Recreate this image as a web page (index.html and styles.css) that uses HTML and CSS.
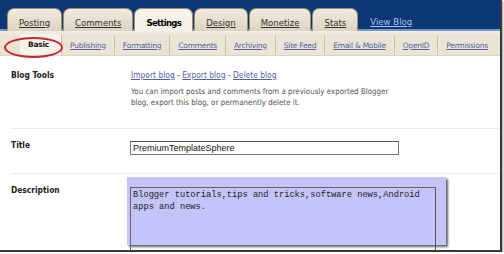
FILE: index.html
```html
<!DOCTYPE html>
<html>
<head>
<meta charset="utf-8">
<link rel="stylesheet" href="styles.css">
</head>
<body>
<div class="frame">
  <header class="topbar">
    <nav class="tabs">
      <a class="tab" href="#">Posting</a>
      <a class="tab" href="#">Comments</a>
      <a class="tab active" href="#">Settings</a>
      <a class="tab" href="#">Design</a>
      <a class="tab" href="#">Monetize</a>
      <a class="tab" href="#">Stats</a>
      <a class="viewblog" href="#">View Blog</a>
    </nav>
  </header>
  <nav class="subtabs">
    <a class="sub active" href="#">Basic</a>
    <a class="sub" href="#">Publishing</a>
    <a class="sub" href="#">Formatting</a>
    <a class="sub" href="#">Comments</a>
    <a class="sub" href="#">Archiving</a>
    <a class="sub" href="#">Site Feed</a>
    <a class="sub" href="#">Email &amp; Mobile</a>
    <a class="sub" href="#">OpenID</a>
    <a class="sub last" href="#">Permissions</a>
    <span class="circle"></span>
  </nav>
  <main class="content">
    <section class="row row-tools">
      <div class="label">Blog Tools</div>
      <div class="body">
        <div class="links"><a href="#">Import blog</a> - <a href="#">Export blog</a> - <a href="#">Delete blog</a></div>
        <p class="note">You can import posts and comments from a previously exported Blogger<br>blog, export this blog, or permanently delete it.</p>
      </div>
    </section>
    <section class="row row-title">
      <div class="label">Title</div>
      <div class="body">
        <input class="title-input" type="text" value="PremiumTemplateSphere">
      </div>
    </section>
    <section class="row row-desc">
      <div class="label">Description</div>
      <div class="desc-box">
        <textarea class="desc">Blogger tutorials,tips and tricks,software news,Android apps and news.</textarea>
      </div>
    </section>
  </main>
</div>
</body>
</html>
```
FILE: styles.css
```css
* { box-sizing: border-box; }
html, body { margin: 0; padding: 0; background: #ffffff; }
body {
  font-family: "DejaVu Sans", Verdana, sans-serif;
}
.frame {
  width: 502px;
  height: 252px;
  overflow: hidden;
  background: #fff;
  border-right: 2px solid #3a3a3a;
  border-bottom: 2px solid #3a3a3a;
  box-shadow: 1px 1px 2px #999;
}
.topbar {
  background: #0b3775;
  height: 31px;
  border-bottom: 2px solid #7594c9;
}
.tabs {
  display: flex;
  align-items: flex-end;
  height: 29px;
  padding-left: 7px;
  gap: 1px;
  font-stretch: condensed;
}
.tab {
  display: block;
  height: 23px;
  margin-bottom: -2px;
  padding: 8px 11px 0;
  font-size: 9.5px;
  line-height: 12px;
  white-space: nowrap;
  color: #333;
  text-decoration: underline;
  background: linear-gradient(#f1ebdf, #ddd3c0);
  border: 1px solid #a09070;
  border-bottom: none;
  border-radius: 7px 7px 0 0;
}
.tab.active {
  background: #f6f2ea;
  color: #000;
  font-weight: bold;
  letter-spacing: -0.7px;
  text-decoration: none;
}
.viewblog {
  margin-left: 11px;
  margin-bottom: 1px;
  font-size: 9.5px;
  line-height: 12px;
  white-space: nowrap;
  color: #a9c4f0;
  text-decoration: underline;
}
.subtabs {
  position: relative;
  display: flex;
  height: 25px;
  padding-left: 20px;
  background: linear-gradient(#f4efe6 0, #ebe3d4 4px, #ebe3d4 100%);
  border-bottom: 1px solid #ddd3c1;
}
.sub {
  display: flex;
  align-items: center;
  margin-top: 4px;
  padding: 0 8px;
  font-size: 7.5px;
  letter-spacing: -0.25px;
  white-space: nowrap;
  color: #4f63a6;
  text-decoration: underline;
  border-right: 1px solid #cdbfa6;
}
.sub.active {
  margin-top: 3px;
  background: #f7f3ec;
  color: #111;
  font-weight: bold;
  text-decoration: none;
  padding: 0 12px 0 8px;
}
.sub.last { border-right: none; }
.circle {
  position: absolute;
  left: 4px;
  top: 6px;
  width: 59px;
  height: 21px;
  border: 2px solid #c9252d;
  border-radius: 50%;
}
.content {
  padding-left: 11px;
  font-stretch: condensed;
}
.row {
  display: flex;
  align-items: flex-start;
  border-bottom: 1px solid #ececec;
}
.label {
  width: 116px;
  flex: none;
  font-size: 8.4px;
  line-height: 12px;
  font-weight: bold;
  color: #222;
}
.row-tools { padding: 13px 0 20px; }
.row-tools .body { padding-left: 4px; }
.links {
  font-size: 8.4px;
  line-height: 12px;
  color: #555;
}
.links a { color: #4f63a6; text-decoration: underline; }
.note {
  margin: 5px 0 0;
  font-size: 7.9px;
  line-height: 11px;
  color: #555;
}
.row-title { padding: 12px 0 18px; }
.row-title .label { margin-top: -2px; }
.title-input {
  display: block;
  margin-left: 3px;
  width: 269px;
  height: 14px;
  padding: 0 2px;
  font-family: "Liberation Sans", Arial, sans-serif;
  font-stretch: normal;
  font-size: 9px;
  color: #111;
  border: 1px solid #777;
  border-top-color: #555;
  background: #fff;
}
.row-desc {
  padding-top: 10px;
  border-bottom: none;
}
.desc-box {
  margin-top: -7px;
  width: 319px;
  height: 68px;
  padding: 10px 0 0 3px;
  background: #c4c4fb;
  box-shadow: 2px 2px 2px #666;
}
.desc {
  display: block;
  width: 306px;
  height: 64px;
  margin: 0;
  padding: 1px 2px;
  resize: none;
  font-family: "Liberation Mono", "Courier New", monospace;
  font-stretch: normal;
  font-size: 8.7px;
  line-height: 12px;
  color: #222;
  background: transparent;
  border: 1px solid #666;
  border-right-color: #555;
}
```
